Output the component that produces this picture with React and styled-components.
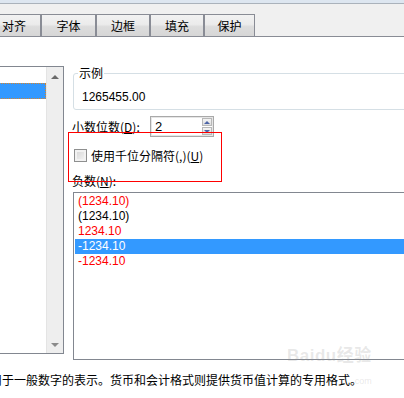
import React from 'react';
import styled, { createGlobalStyle } from 'styled-components';

const GlobalStyle = createGlobalStyle`
  html, body {
    margin: 0;
    padding: 0;
    background: #ffffff;
  }
  body {
    font-family: "Liberation Sans", "Noto Sans CJK SC", sans-serif;
    font-size: 12px;
    color: #000000;
  }
`;

const Page = styled.div`
  position: relative;
  width: 404px;
  height: 398px;
  overflow: hidden;
  background: #ffffff;
`;

const TitleStrip = styled.div`
  height: 3px;
  background: #dde6f0;
  border-bottom: 1px solid #aab2bb;
`;

const TabBar = styled.div`
  display: flex;
  align-items: flex-end;
  height: 32px;
  margin-left: -13px;
  padding-right: 13px;
  background: #f0f0f0;
  border-bottom: 1px solid #898c95;
`;

const Tab = styled.div`
  box-sizing: border-box;
  width: ${p => p.$w}px;
  height: 22px;
  border: 1px solid #898c95;
  border-bottom: none;
  background: linear-gradient(#f2f2f2, #ebebeb 45%, #dddddd 55%, #d6d6d6);
  font-family: "Noto Sans CJK SC", sans-serif;
  font-size: 12px;
  line-height: 21px;
  text-align: center;
  color: #000;
`;

const Body = styled.div`
  display: flex;
  align-items: flex-start;
`;

const CategoryList = styled.div`
  box-sizing: border-box;
  display: flex;
  flex: 0 0 154px;
  height: 288px;
  margin-top: 29px;
  margin-left: -90px;
  border: 1px solid #828790;
  border-left: none;
  background: #fff;
`;

const CategoryItems = styled.div`
  flex: 1;
  overflow: hidden;
`;

const CategoryItem = styled.div`
  box-sizing: border-box;
  height: 16px;
  padding-left: 4px;
  font-family: "Noto Sans CJK SC", sans-serif;
  line-height: 14px;
  white-space: nowrap;
  border: 1px solid transparent;
  ${p => p.$selected && `
    background: #3399ff;
    color: #fff;
    border: 1px dotted #d9852c;
  `}
`;

const ScrollBar = styled.div`
  display: flex;
  flex-direction: column;
  justify-content: space-between;
  align-items: center;
  flex: 0 0 17px;
  padding: 8px 0 6px;
  box-sizing: border-box;
  background: #eeeeee;
  border-left: 1px solid #e4e4e4;
`;

const Arrow = styled.div`
  width: 0;
  height: 0;
  border-left: 4px solid transparent;
  border-right: 4px solid transparent;
  ${p => (p.$down ? 'border-top: 4px solid #8a8a8a;' : 'border-bottom: 4px solid #6a6a6a;')}
`;

const RightCol = styled.div`
  flex: 0 0 360px;
  margin-left: 9px;
  display: flex;
  flex-direction: column;
`;

const Group = styled.fieldset`
  margin: 28px 0 0;
  padding: 9px 0 5px 8px;
  border: 1px solid #d5dfe5;
  border-radius: 3px;
`;

const GroupTitle = styled.legend`
  margin-left: -4px;
  padding: 0 1px;
  font-family: "Noto Sans CJK SC", sans-serif;
  font-size: 12px;
  line-height: 16px;
`;

const SampleValue = styled.div`
  line-height: 14px;
`;

const FieldRow = styled.div`
  display: flex;
  align-items: center;
  height: ${p => p.$h}px;
  margin-top: ${p => p.$mt}px;
`;

const FieldLabel = styled.label`
  flex: 0 0 ${p => p.$w || 'auto'};
  margin-left: ${p => p.$ml}px;
  font-family: "Noto Sans CJK SC", sans-serif;
  font-size: 12px;
  line-height: 16px;
  white-space: nowrap;

  u {
    text-underline-offset: 1px;
  }
`;

const SpinBox = styled.div`
  box-sizing: border-box;
  display: flex;
  align-items: stretch;
  width: 64px;
  height: 21px;
  border: 1px solid #a9a9a9;
  box-shadow: inset 0 0 0 1px #e6e6e6;
  background: #fff;
`;

const SpinValue = styled.div`
  flex: 1;
  padding-left: 4px;
  font-size: 13px;
  line-height: 19px;
`;

const SpinButtons = styled.div`
  display: flex;
  flex-direction: column;
  gap: 1px;
  width: 10px;
  padding: 1px 1px 1px 0;
`;

const SpinButton = styled.div`
  flex: 1;
  display: flex;
  align-items: center;
  justify-content: center;
  box-sizing: border-box;
  border: 1px solid #b8b8b8;
  background: linear-gradient(#f4f4f4, #dedede);
`;

const SpinTri = styled.div`
  width: 0;
  height: 0;
  border-left: 3px solid transparent;
  border-right: 3px solid transparent;
  ${p => (p.$down ? 'border-top: 3px solid #4d64a6;' : 'border-bottom: 3px solid #4d64a6;')}
`;

const CheckBox = styled.div`
  box-sizing: border-box;
  flex: 0 0 13px;
  height: 13px;
  margin-left: 1px;
  margin-right: 4px;
  border: 1px solid #8e8f8f;
  background: linear-gradient(135deg, #d4d4d4, #f6f6f6);
  box-shadow: inset 0 0 0 2px #f2f2f2;
`;

const NegList = styled.div`
  box-sizing: border-box;
  height: 168px;
  margin-top: 3px;
  padding: 1px;
  border: 1px solid #828790;
  background: #fff;
`;

const NegItem = styled.div`
  height: 15px;
  padding-left: 3px;
  font-size: 12px;
  line-height: 15px;
  color: ${p => (p.$selected ? '#ffffff' : p.$red ? '#ff0000' : '#000000')};
  background: ${p => (p.$selected ? '#3399ff' : 'transparent')};
`;

const Description = styled.div`
  margin: 12px 0 0 -10px;
  font-family: "Noto Sans CJK SC", sans-serif;
  font-size: 12px;
  line-height: 16px;
  white-space: nowrap;
`;

const Highlight = styled.div`
  position: absolute;
  left: 68px;
  top: 132px;
  width: 152px;
  height: 48px;
  border: 1px solid #ff0000;
  pointer-events: none;
`;

const Watermark = styled.div`
  position: absolute;
  left: 287px;
  top: 346px;
  display: flex;
  flex-direction: column;
  align-items: flex-end;
  color: rgba(150, 150, 150, 0.22);
  font-family: "Liberation Sans", "Noto Sans CJK SC", sans-serif;
  font-weight: bold;
  pointer-events: none;
`;

const MarkMain = styled.div`
  font-size: 17px;
  line-height: 20px;
  letter-spacing: 0.5px;
`;

const MarkSub = styled.div`
  margin-top: 10px;
  font-size: 9px;
  font-weight: normal;
  line-height: 10px;
`;

const tabs = [
  { label: '对齐', w: 54 },
  { label: '字体', w: 55 },
  { label: '边框', w: 54 },
  { label: '填充', w: 54 },
  { label: '保护', w: 51 },
];

const categories = ['常规', '数值', '货币', '会计专用', '日期', '时间', '百分比', '分数', '科学记数', '文本', '特殊', '自定义'];

const negatives = [
  { text: '(1234.10)', red: true },
  { text: '(1234.10)' },
  { text: '1234.10', red: true },
  { text: '-1234.10', selected: true },
  { text: '-1234.10', red: true },
];

const App = () => {
  return (
    <Page>
      <GlobalStyle />
      <TitleStrip />
      <TabBar>
        {tabs.map(t => (
          <Tab key={t.label} $w={t.w}>{t.label}</Tab>
        ))}
      </TabBar>

      <Body>
        <CategoryList>
          <CategoryItems>
            {categories.map((c, i) => (
              <CategoryItem key={c} $selected={i === 1}>{c}</CategoryItem>
            ))}
          </CategoryItems>
          <ScrollBar>
            <Arrow />
            <Arrow $down />
          </ScrollBar>
        </CategoryList>

        <RightCol>
          <Group>
            <GroupTitle>示例</GroupTitle>
            <SampleValue>1265455.00</SampleValue>
          </Group>

          <FieldRow $h={21} $mt={6}>
            <FieldLabel $ml={-1} $w="78px">小数位数(<u>D</u>):</FieldLabel>
            <SpinBox>
              <SpinValue>2</SpinValue>
              <SpinButtons>
                <SpinButton><SpinTri /></SpinButton>
                <SpinButton><SpinTri $down /></SpinButton>
              </SpinButtons>
            </SpinBox>
          </FieldRow>

          <FieldRow $h={13} $mt={12}>
            <CheckBox />
            <FieldLabel $ml={0}>使用千位分隔符(,)(<u>U</u>)</FieldLabel>
          </FieldRow>

          <FieldRow $h={16} $mt={11}>
            <FieldLabel $ml={-1}>负数(<u>N</u>):</FieldLabel>
          </FieldRow>

          <NegList>
            {negatives.map((n, i) => (
              <NegItem key={i} $red={n.red} $selected={n.selected}>{n.text}</NegItem>
            ))}
          </NegList>
        </RightCol>
      </Body>

      <Description>用于一般数字的表示。货币和会计格式则提供货币值计算的专用格式。</Description>

      <Highlight />
      <Watermark>
        <MarkMain>Baidu经验</MarkMain>
        <MarkSub>.com</MarkSub>
      </Watermark>
    </Page>
  );
};

export default App;
